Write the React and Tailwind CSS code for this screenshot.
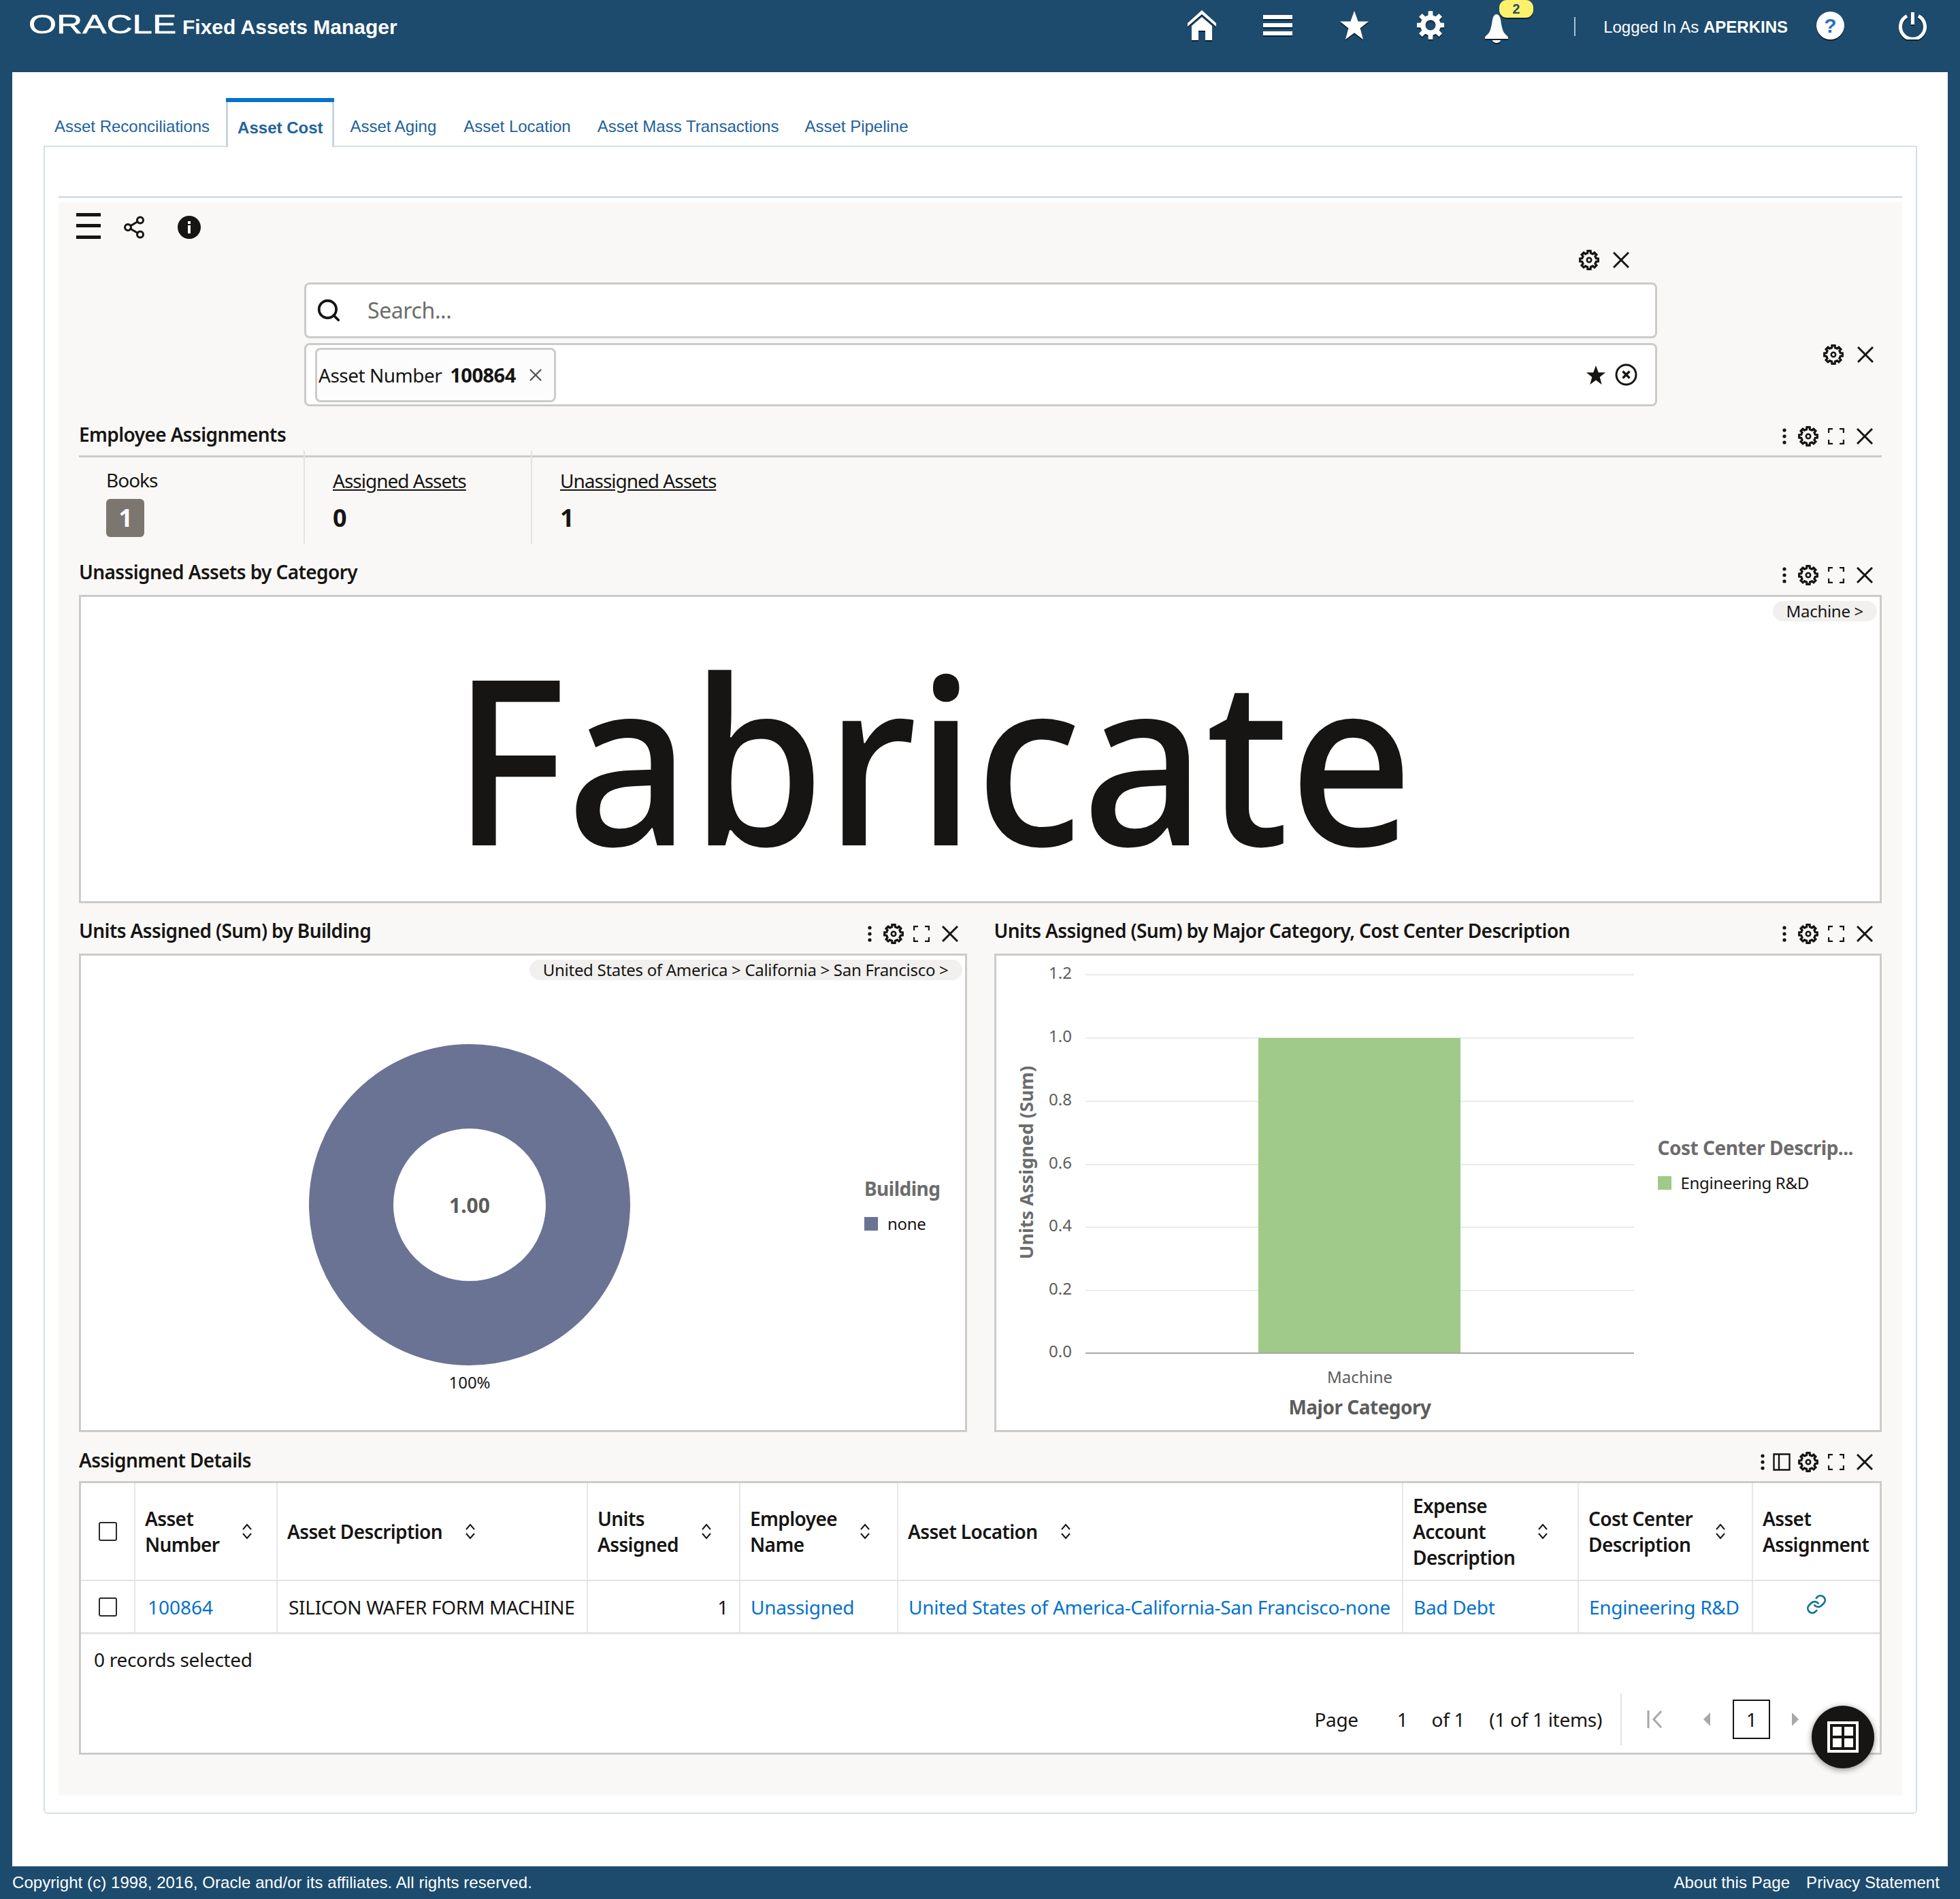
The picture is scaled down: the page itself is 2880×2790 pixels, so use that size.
import { Search, Share2, X } from 'lucide-react';

const gearPath = (cx, cy, rOut, rIn, teeth = 8) => {
  const pts = [];
  const step = (Math.PI * 2) / teeth;
  for (let i = 0; i < teeth; i++) {
    const a = i * step - Math.PI / 2;
    const w = step * 0.2;
    const w2 = step * 0.3;
    [[a - w2, rIn], [a - w, rOut], [a + w, rOut], [a + w2, rIn]].forEach(([t, r]) => {
      pts.push(`${(cx + r * Math.cos(t)).toFixed(2)} ${(cy + r * Math.sin(t)).toFixed(2)}`);
    });
  }
  return `M${pts.join('L')}Z`;
};

const Gear = () => (
  <svg width="30" height="30" viewBox="0 0 30 30" fill="none" stroke="#161513" strokeWidth="3.2" className="shrink-0">
    <path d={gearPath(15, 15, 13.5, 10.5)} strokeLinejoin="miter" />
    <circle cx="15" cy="15" r="3.2" strokeWidth="2.6" />
  </svg>
);

const Close = () => (
  <svg width="24" height="24" viewBox="0 0 24 24" stroke="#161513" strokeWidth="3" className="shrink-0">
    <path d="M1 1 23 23M23 1 1 23" />
  </svg>
);

const Expand = () => (
  <svg width="24" height="24" viewBox="0 0 24 24" fill="none" stroke="#161513" strokeWidth="2.4" className="shrink-0">
    <path d="M1 7V1h6M17 1h6v6M23 17v6h-6M7 23H1v-6" />
  </svg>
);

const Kebab = () => (
  <svg width="6" height="24" viewBox="0 0 6 24" fill="#161513" className="shrink-0">
    <circle cx="3" cy="3" r="2.6" />
    <circle cx="3" cy="12" r="2.6" />
    <circle cx="3" cy="21" r="2.6" />
  </svg>
);

const Sort = () => (
  <svg width="16" height="24" viewBox="0 0 16 24" fill="none" stroke="#161513" strokeWidth="2" className="shrink-0">
    <path d="M2 9 8 2l6 7M2 15l6 7 6-7" />
  </svg>
);

const Box = () => <span className="block w-[27px] h-[28px] border-2 border-[#2b2a28] rounded-[3px] bg-white" />;

const PanelHead = ({ title, columns, tight, low }) => (
  <div className={`flex items-center justify-between h-[44px] mt-[19px] pr-[13px] ${tight ? 'mb-[9px]' : 'mb-[12px]'}`}>
    <h2 className="text-[28px] font-semibold leading-[44px] tracking-[-0.6px] text-[#161513]">{title}</h2>
    <div className={`flex items-center ${low ? 'pt-[9px]' : 'pt-[6px]'}`}>
      <Kebab />
      {columns && (
        <svg width="26" height="26" viewBox="0 0 26 26" fill="none" stroke="#161513" strokeWidth="2.4" className="ml-[12px] -mr-[6px] shrink-0">
          <path d="M1.5 1.5h23v23h-23zM9 1.5v23" />
        </svg>
      )}
      <span className="ml-[17px]"><Gear /></span>
      <span className="ml-[14px]"><Expand /></span>
      <span className="ml-[18px]"><Close /></span>
    </div>
  </div>
);

const Chip = ({ children, className }) => (
  <div className={`absolute top-[6px] right-[4px] h-[30px] px-[20px] rounded-full bg-[#f1f0ee] text-[24px] leading-[30px] tracking-[-0.3px] text-[#161513] ${className || ''}`}>
    {children}
  </div>
);

const Legend = ({ title, label, color, className }) => (
  <div className={className}>
    <div className="text-[28px] leading-[32px] font-bold text-[#6c6c6c] tracking-[-0.5px] whitespace-nowrap">{title}</div>
    <div className="flex items-center gap-[14px] mt-[20px]">
      <span className={`w-[20px] h-[20px] ${color}`} />
      <span className="text-[24px] leading-[32px] tracking-[-0.3px] text-[#161513] whitespace-nowrap">{label}</span>
    </div>
  </div>
);

const ticks = [['1.2', 28], ['1.0', 121], ['0.8', 214], ['0.6', 307], ['0.4', 399], ['0.2', 492]];

const cols = 'grid grid-cols-[80px_209px_456px_224px_232px_742px_258px_256px_1fr]';
const headers = [
  [['Asset', 'Number'], true],
  [['Asset Description'], true],
  [['Units', 'Assigned'], true],
  [['Employee', 'Name'], true],
  [['Asset Location'], true],
  [['Expense', 'Account', 'Description'], true],
  [['Cost Center', 'Description'], true],
  [['Asset', 'Assignment'], false],
];
const link = 'text-[#0572ce]';

export default function App() {
  return (
    <div className="w-[2880px] h-[2790px] flex flex-col bg-[#1d4b6e] font-['Noto_Sans',sans-serif] text-[#161513] overflow-hidden">
      {/* top bar */}
      <header className="h-[106px] shrink-0 flex items-start pl-[42px] pr-[49px] text-white font-['Liberation_Sans',sans-serif]">
        <div className="h-[74px] flex items-center">
          <span className="block w-[226px] text-[38px] leading-none origin-left scale-x-[1.39] font-normal blur-[0.4px] -mt-[2px] [-webkit-text-stroke:0.6px_white]">ORACLE</span>
          <span className="text-[30px] font-bold ml-[0px] mt-[5px]">Fixed Assets Manager</span>
        </div>
        <div className="ml-auto h-[74px] flex items-center drop-shadow-[0_2px_0_rgba(0,0,0,0.55)]">
          <svg width="42" height="44" viewBox="0 0 42 44" fill="white">
            <path d="M21 0 42 19v5L21 6 0 24v-5Z" />
            <path d="M21 10 36 23v21H26V30H16v14H6V23Z" />
          </svg>
          <svg width="43" height="30" viewBox="0 0 43 30" fill="white" className="ml-[69px]">
            <path d="M0 0h43v6H0zM0 12h43v6H0zM0 24h43v6H0z" />
          </svg>
          <svg width="42" height="42" viewBox="0 0 42 42" fill="white" className="ml-[70px]">
            <path d="M21 0l5.6 15.5H42L29.6 25.4 34 42 21 32.2 8 42l4.4-16.6L0 15.5h15.4Z" />
          </svg>
          <svg width="40" height="42" viewBox="0 0 40 42" className="ml-[71px]">
            <path fillRule="evenodd" fill="white" d={`${gearPath(20, 21, 21, 15)}M20 13.5a7.5 7.5 0 1 0 .01 0Z`} />
          </svg>
          <div className="relative ml-[60px] mt-[10px]">
            <svg width="34" height="42" viewBox="0 0 34 42" fill="white" className="block">
              <path d="M17 0c3 0 5 3 6 8 1 6 2 14 5 19 2 3 6 5 6 7v2H0v-2c0-2 4-4 6-7 3-5 4-13 5-19 1-5 3-8 6-8Z" />
              <path d="M11 38h12c0 2-3 4-6 4s-6-2-6-4Z" />
            </svg>
            <span className="absolute -top-[21px] left-[21px] w-[50px] h-[26px] rounded-[11px] bg-[#fdf06a] text-[#1d4b6e] text-[20px] leading-[26px] font-bold text-center">2</span>
          </div>
        </div>
        <div className="h-[74px] flex items-center">
          <span className="block w-[2px] h-[28px] bg-[#a9c0d2] ml-[97px] mt-[4px]" />
          <span className="ml-[41px] text-[24px] whitespace-nowrap mt-[6px]">
            Logged In As <b>APERKINS</b>
          </span>
          <span className="ml-[42px] w-[41px] h-[41px] rounded-full bg-white flex items-center justify-center text-[#2a6fbf] text-[30px] font-bold shadow-[0_2px_0_rgba(0,0,0,0.55)]">?</span>
          <svg width="41" height="42" viewBox="0 0 41 42" fill="none" stroke="white" strokeWidth="5" className="ml-[80px] drop-shadow-[0_2px_0_rgba(0,0,0,0.55)]">
            <path d="M12 7.5a18 18 0 1 0 17 0M20.500 2v18" />
          </svg>
        </div>
      </header>

      {/* white page */}
      <main className="h-[2636px] shrink-0 mx-[18px] bg-white pt-[38px] pl-[46px] pr-[45px]">
        <nav className="flex h-[70px] font-['Liberation_Sans',sans-serif] text-[24px] text-[#22619c]">
          <a className="pl-[16px] pr-[24px] pt-[24px]">Asset Reconciliations</a>
          <a className="relative z-10 h-[72px] bg-white border-x-[3px] border-[#c9d5df] px-[14px] pt-[26px] font-bold before:absolute before:-left-[3px] before:-right-[3px] before:top-0 before:h-[6px] before:bg-[#0572ce]">Asset Cost</a>
          <a className="pl-[23px] pr-[20px] pt-[24px]">Asset Aging</a>
          <a className="px-[20px] pt-[24px]">Asset Location</a>
          <a className="px-[19px] pt-[24px]">Asset Mass Transactions</a>
          <a className="px-[19px] pt-[24px]">Asset Pipeline</a>
        </nav>

        <div className="h-[2451px] border-[2px] border-[#d6dfe6] rounded-b-[6px] pl-[20px] pr-[20px] pt-[72px]">
          <div className="h-[3px] bg-[#d6dfe6]" />
          <div className="mt-[6px] h-[2341px] bg-[#f9f8f6] px-[30px] relative">
            {/* toolbar */}
            <div className="h-[73px] flex items-center">
              <svg width="36" height="38" viewBox="0 0 36 38" fill="#161513" className="-ml-[4px] -mt-[4px]">
                <path d="M0 0h36v5H0zM0 16h36v5H0zM0 33h36v5H0z" />
              </svg>
              <Share2 size={36} strokeWidth={2} className="ml-[31px]" />
              <svg width="34" height="34" viewBox="0 0 34 34" className="ml-[46px]">
                <circle cx="17" cy="17" r="17" fill="#161513" />
                <path d="M15 14h4v12h-4zM15 8h4v4h-4z" fill="white" />
              </svg>
            </div>

            <div className="flex items-start">
              <div className="ml-[331px] w-[1988px] shrink-0">
                <div className="h-[24px] flex items-center justify-end gap-[20px] pr-[41px]">
                  <Gear />
                  <Close />
                </div>
                <div className="mt-[21px] h-[82px] bg-white border-[3px] border-[#cbcbcb] rounded-[8px] flex items-center pl-[14px]">
                  <Search size={38} strokeWidth={2.4} />
                  <span className="ml-[38px] text-[32px] text-[#6d6d6d] tracking-[-0.4px]">Search...</span>
                </div>
                <div className="mt-[7px] h-[93px] bg-white border-[3px] border-[#cbcbcb] rounded-[8px] flex items-center pl-[13px] pr-[26px]">
                  <div className="h-[80px] w-[354px] bg-[#fcfcfc] border-[3px] border-[#cbcbcb] rounded-[8px] flex items-center pl-[2px] text-[28px] tracking-[-0.5px] whitespace-nowrap">
                    Asset Number <b className="ml-[12px] font-bold text-[29px]">100864</b>
                    <X size={30} strokeWidth={1.8} className="ml-[14px] text-[#555]" />
                  </div>
                  <svg width="28" height="28" viewBox="0 0 42 42" fill="#161513" className="ml-auto">
                    <path d="M21 0l5.6 15.5H42L29.6 25.4 34 42 21 32.200 8 42l4.400-16.600L0 15.500h15.400Z" />
                  </svg>
                  <svg width="33" height="33" viewBox="0 0 33 33" fill="none" stroke="#161513" className="ml-[14px]">
                    <circle cx="16.500" cy="16.500" r="14.500" strokeWidth="3" />
                    <path d="M11.500 11.500l10 10M21.500 11.500l-10 10" strokeWidth="3.400" />
                  </svg>
                </div>
              </div>
              <div className="ml-auto mt-[136px] pr-[12px] flex items-center gap-[20px]">
                <Gear />
                <Close />
              </div>
            </div>

            {/* employee assignments */}
            <div className="-mb-[1px] border-b-[3px] border-[#cbcbcb]">
              <PanelHead title="Employee Assignments" tight />
            </div>
            <div className="flex h-[137px] -mt-[10px] text-[28px] tracking-[-1px]">
              <div className="w-[332px] pl-[40px] pt-[24px] border-r-2 border-[#e3e3e1]">
                <div className="leading-[38px]">Books</div>
                <span className="mt-[9px] block w-[56px] h-[56px] rounded-[6px] bg-[#7b7670] text-white text-[36px] font-bold leading-[56px] text-center">1</span>
              </div>
              <div className="w-[334px] pl-[41px] pt-[25px] border-r-2 border-[#e3e3e1]">
                <div className="leading-[38px] underline">Assigned Assets</div>
                <div className="mt-[11px] text-[36px] font-bold leading-[50px]">0</div>
              </div>
              <div className="pl-[41px] pt-[25px]">
                <div className="leading-[38px] underline">Unassigned Assets</div>
                <div className="mt-[11px] text-[36px] font-bold leading-[50px]">1</div>
              </div>
            </div>

            {/* tag cloud */}
            <PanelHead title="Unassigned Assets by Category" low />
            <div className="relative h-[453px] bg-white border-[3px] border-[#cbcbcb] flex items-center justify-center pr-[141px] pt-[20px]">
              <Chip>Machine &gt;</Chip>
              <span className="inline-block text-[339px] font-medium leading-none scale-x-[0.94] text-[#161513]">Fabricate</span>
            </div>

            {/* charts */}
            <div className="grid grid-cols-2 gap-[40px] -mt-[1px]">
              <div>
                <PanelHead title="Units Assigned (Sum) by Building" low />
                <div className="relative h-[703px] bg-white border-[3px] border-[#cbcbcb] flex">
                  <Chip>United States of America &gt; California &gt; San Francisco &gt;</Chip>
                  <svg width="1151" height="696" viewBox="0 0 1151 696" className="shrink-0">
                    <circle cx="571" cy="366" r="174" fill="none" stroke="#6b7394" strokeWidth="124" />
                    <text x="571" y="378" textAnchor="middle" fontSize="30" fontWeight="700" fill="#5c5c5c">1.00</text>
                    <text x="571" y="636" textAnchor="middle" fontSize="24" fill="#161513">100%</text>
                  </svg>
                  <Legend title="Building" label="none" color="bg-[#6b7394]" className="pt-[326px]" />
                </div>
              </div>
              <div>
                <PanelHead title="Units Assigned (Sum) by Major Category, Cost Center Description" low />
                <div className="h-[703px] bg-white border-[3px] border-[#cbcbcb] flex">
                  <svg width="972" height="696" viewBox="0 0 972 696" className="shrink-0">
                    {ticks.map(([label, y]) => (
                      <g key={label}>
                        <path d={`M131 ${y}H937`} stroke="#e7ecef" strokeWidth="2" />
                        <text x="111" y={y + 6} textAnchor="end" fontSize="24" fill="#5c5c5c">{label}</text>
                      </g>
                    ))}
                    <rect x="385" y="121" width="297" height="463" fill="#a0ca8a" />
                    <path d="M131 584H937" stroke="#a9a9a9" strokeWidth="2" />
                    <text x="111" y="590" textAnchor="end" fontSize="24" fill="#5c5c5c">0.0</text>
                    <text x="534" y="628" textAnchor="middle" fontSize="24" fill="#5c5c5c">Machine</text>
                    <text x="534" y="674" textAnchor="middle" fontSize="28" fontWeight="700" letterSpacing="-0.5" fill="#5c5c5c">Major Category</text>
                    <text transform="translate(54 304) rotate(-90)" textAnchor="middle" fontSize="27" fontWeight="700" fill="#6c6c6c">Units Assigned (Sum)</text>
                  </svg>
                  <Legend title="Cost Center Descrip..." label="Engineering R&D" color="bg-[#a0ca8a]" className="pt-[266px]" />
                </div>
              </div>
            </div>

            {/* assignment table */}
            <PanelHead title="Assignment Details" columns tight />
            <div className="h-[402px] bg-white border-[3px] border-[#cbcbcb] text-[28px] tracking-[-0.3px]">
              <div className={`${cols} h-[144px] border-b-2 border-[#e3e3e3]`}>
                <div className="flex items-center justify-center border-r-2 border-[#e8e8e8]"><Box /></div>
                {headers.map(([lines, sort], i) => (
                  <div key={i} className={`flex items-center gap-[33px] pl-[14px] font-semibold tracking-[-0.6px] leading-[38px] ${i < 7 ? 'border-r-2 border-[#e8e8e8]' : ''}`}>
                    <div>{lines.map((l) => <div key={l} className="whitespace-nowrap">{l}</div>)}</div>
                    {sort && <Sort />}
                  </div>
                ))}
              </div>
              <div className={`${cols} h-[78px] border-b-[3px] border-[#e3e3e3]`}>
                <div className="flex items-center justify-center border-r-2 border-[#e8e8e8]"><Box /></div>
                <div className={`flex items-center pl-[18px] tracking-[0px] border-r-2 border-[#e8e8e8] ${link}`}>100864</div>
                <div className="flex items-center pl-[16px] border-r-2 border-[#e8e8e8] whitespace-nowrap">SILICON WAFER FORM MACHINE</div>
                <div className="flex items-center justify-end pr-[16px] border-r-2 border-[#e8e8e8]">1</div>
                <div className={`flex items-center pl-[15px] border-r-2 border-[#e8e8e8] ${link}`}>Unassigned</div>
                <div className={`flex items-center pl-[15px] border-r-2 border-[#e8e8e8] whitespace-nowrap ${link}`}>United States of America-California-San Francisco-none</div>
                <div className={`flex items-center pl-[15px] border-r-2 border-[#e8e8e8] ${link}`}>Bad Debt</div>
                <div className={`flex items-center pl-[15px] border-r-2 border-[#e8e8e8] whitespace-nowrap ${link}`}>Engineering R&amp;D</div>
                <div className="flex items-center justify-center pb-[8px]">
                  <svg width="32" height="32" viewBox="0 0 24 24" fill="none" stroke="#0e7490" strokeWidth="2" strokeLinecap="round">
                    <path d="M10 13a5 5 0 0 0 7.500.500l3-3a5 5 0 0 0-7-7l-1.700 1.700" />
                    <path d="M14 11a5 5 0 0 0-7.500-.500l-3 3a5 5 0 0 0 7 7l1.700-1.700" />
                  </svg>
                </div>
              </div>
              <div className="pl-[19px] pt-[18px] leading-[38px]">0 records selected</div>
              <div className="mt-[30px] flex items-center justify-end h-[78px] pr-[118px] whitespace-nowrap">
                <span>Page</span>
                <span className="ml-[57px]">1</span>
                <span className="ml-[35px]">of 1</span>
                <span className="ml-[36px]">(1 of 1 items)</span>
                <span className="ml-[27px] w-[2px] h-[76px] bg-[#e3e3e3]" />
                <svg width="24" height="26" viewBox="0 0 24 26" fill="none" stroke="#a8a8a8" strokeWidth="3" className="ml-[37px]">
                  <path d="M2 0v26M21 1 10 13l11 12" />
                </svg>
                <svg width="12" height="20" viewBox="0 0 12 20" fill="#a8a8a8" className="ml-[58px]"><path d="M11 0v20L1 10Z" /></svg>
                <span className="ml-[32px] w-[55px] h-[58px] border-2 border-[#161513] flex items-center justify-center">1</span>
                <svg width="12" height="20" viewBox="0 0 12 20" fill="#a8a8a8" className="ml-[31px]"><path d="M1 0v20l10-10Z" /></svg>
              </div>
            </div>

            <div className="absolute left-[2576px] bottom-[40px] w-[92px] h-[92px] rounded-full bg-[#161513] shadow-[0_2px_10px_rgba(0,0,0,0.45)] flex items-center justify-center">
              <svg width="46" height="46" viewBox="0 0 46 46">
                <rect width="46" height="46" fill="white" />
                <rect x="4" y="4" width="38" height="38" fill="#161513" />
                <path d="M8 8h13v13H8zM25 8h13v13H25zM8 25h13v13H8zM25 25h13v13H25z" fill="white" />
              </svg>
            </div>
          </div>
        </div>
      </main>

      {/* footer */}
      <footer className="h-[48px] shrink-0 flex items-center justify-between pl-[18px] pr-[30px] text-white text-[24px] tracking-[0.07px] font-['Liberation_Sans',sans-serif]">
        <span>Copyright (c) 1998, 2016, Oracle and/or its affiliates. All rights reserved.</span>
        <span className="flex gap-[24px]">
          <a>About this Page</a>
          <a>Privacy Statement</a>
        </span>
      </footer>
    </div>
  );
}
